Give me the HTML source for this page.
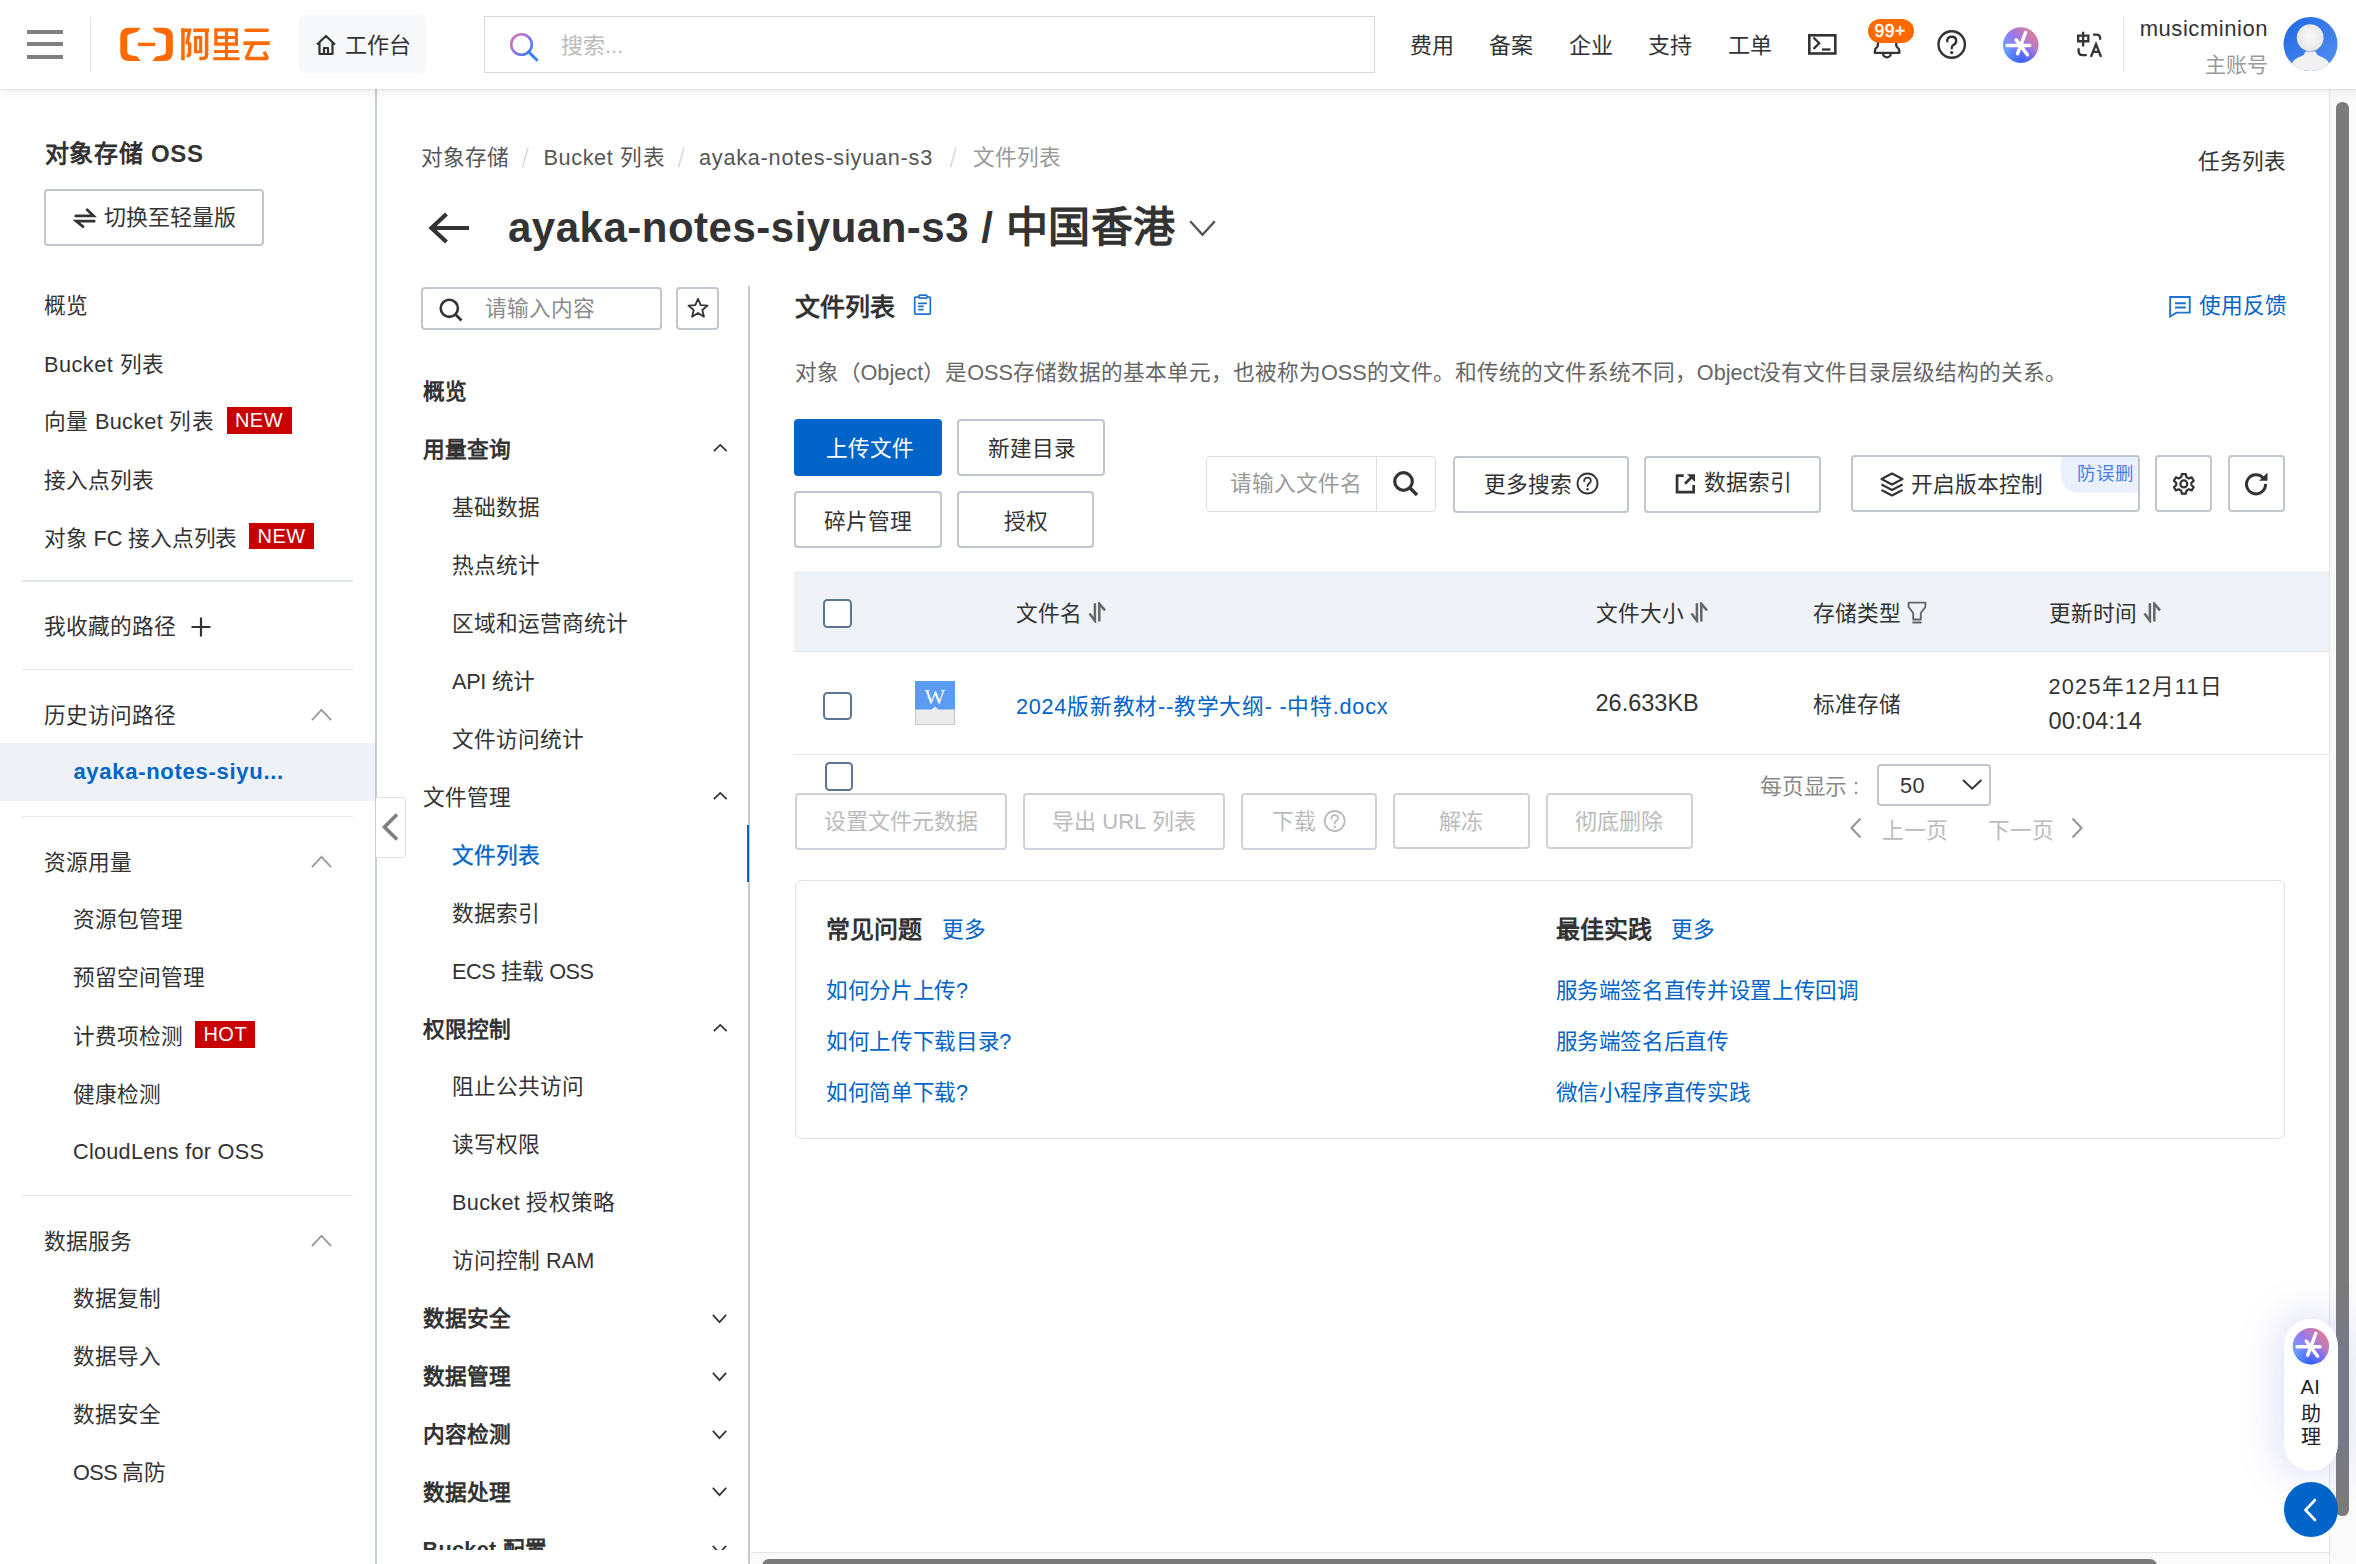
<!DOCTYPE html><html lang="zh-CN"><head><meta charset="utf-8"><title>OSS</title><style>
*{margin:0;padding:0;box-sizing:border-box}
html,body{width:2356px;height:1564px;overflow:hidden;background:#fff;font-family:"Liberation Sans",sans-serif;color:#333}
.a{position:absolute}
.t{position:absolute;white-space:nowrap;line-height:1}
.b{position:absolute;border:2px solid #c0c6ce;border-radius:4px;background:#fff}
</style></head><body>
<div class="a" style="left:0px;top:88px;width:375px;height:1476px;background:#fff"></div>
<div class="a" style="left:375px;top:88px;width:2px;height:1476px;background:#c6ccd4"></div>
<div class="t " style="left:44.5px;top:142px;font-size:24px;color:#333;font-weight:700;letter-spacing:0.75px;">对象存储 OSS</div>
<div class="b" style="left:44px;top:189px;width:220px;height:57px"></div>
<svg class="a" style="left:73px;top:205px;" width="24" height="26" viewBox="0 0 24 26" fill="none"><path d="M2.8 10.9 H20.6 L14.2 4.8 M21.2 16.2 H3.4 L10 21.6" stroke="#333" stroke-width="2.7" stroke-linecap="round" stroke-linejoin="miter"/></svg>
<div class="t " style="left:104px;top:207px;font-size:22px;color:#333;">切换至轻量版</div>
<div class="t " style="left:44px;top:295px;font-size:21.7px;color:#333;">概览</div>
<div class="t " style="left:44px;top:354px;font-size:21.7px;color:#333;letter-spacing:0.5px;">Bucket 列表</div>
<div class="t " style="left:44px;top:411px;font-size:21.7px;color:#333;letter-spacing:0.3px;">向量 Bucket 列表</div>
<div class="a" style="left:226.5px;top:407px;width:65px;height:26.6px;background:#c80000;color:#fff;font-size:20px;line-height:26.6px;text-align:center;letter-spacing:0.5px">NEW</div>
<div class="t " style="left:44px;top:469.5px;font-size:21.7px;color:#333;">接入点列表</div>
<div class="t " style="left:44px;top:527.5px;font-size:21.7px;color:#333;letter-spacing:-0.15px;">对象 FC 接入点列表</div>
<div class="a" style="left:249.3px;top:523px;width:64.7px;height:26.4px;background:#c80000;color:#fff;font-size:20px;line-height:26.4px;text-align:center;letter-spacing:0.5px">NEW</div>
<div class="a" style="left:22px;top:580px;width:331px;height:1.5px;background:#e3e6ea"></div>
<div class="t " style="left:44px;top:616px;font-size:21.7px;color:#333;">我收藏的路径</div>
<svg class="a" style="left:189px;top:615px;" width="24" height="24" viewBox="0 0 24 24" fill="none"><path d="M12 2.5 V21.5 M2.5 12 H21.5" stroke="#333" stroke-width="2.2"/></svg>
<div class="a" style="left:22px;top:668.5px;width:331px;height:1.5px;background:#e3e6ea"></div>
<div class="t " style="left:44px;top:705px;font-size:21.7px;color:#333;">历史访问路径</div>
<svg class="a" style="left:307.5px;top:706px;" width="27" height="18" viewBox="0 0 27 18" fill="none"><path d="M3.9 14.1 L13.5 3.9 L23.1 14.1" stroke="#999" stroke-width="1.8"/></svg>
<div class="a" style="left:0px;top:743px;width:375px;height:58px;background:#eef1f6"></div>
<div class="t " style="left:73.4px;top:761.2px;font-size:22px;color:#0064c8;font-weight:700;letter-spacing:0.72px;">ayaka-notes-siyu...</div>
<div class="a" style="left:22px;top:815.5px;width:331px;height:1.5px;background:#e3e6ea"></div>
<div class="t " style="left:44px;top:852px;font-size:21.7px;color:#333;">资源用量</div>
<svg class="a" style="left:307.5px;top:853px;" width="27" height="18" viewBox="0 0 27 18" fill="none"><path d="M3.9 14.1 L13.5 3.9 L23.1 14.1" stroke="#999" stroke-width="1.8"/></svg>
<div class="t " style="left:73px;top:909px;font-size:21.7px;color:#333;">资源包管理</div>
<div class="t " style="left:73px;top:967.4px;font-size:21.7px;color:#333;">预留空间管理</div>
<div class="t " style="left:73px;top:1025.6px;font-size:21.7px;color:#333;">计费项检测</div>
<div class="a" style="left:195.2px;top:1021.3px;width:60.2px;height:26.9px;background:#c80000;color:#fff;font-size:20px;line-height:26.9px;text-align:center;letter-spacing:0.5px">HOT</div>
<div class="t " style="left:73px;top:1083.5px;font-size:21.7px;color:#333;">健康检测</div>
<div class="t " style="left:73px;top:1140.5px;font-size:21.7px;color:#333;letter-spacing:0.25px;">CloudLens for OSS</div>
<div class="a" style="left:22px;top:1194.5px;width:331px;height:1.5px;background:#e3e6ea"></div>
<div class="t " style="left:44px;top:1230.5px;font-size:21.7px;color:#333;">数据服务</div>
<svg class="a" style="left:307.5px;top:1232px;" width="27" height="18" viewBox="0 0 27 18" fill="none"><path d="M3.9 14.1 L13.5 3.9 L23.1 14.1" stroke="#999" stroke-width="1.8"/></svg>
<div class="t " style="left:73px;top:1288.4px;font-size:21.7px;color:#333;">数据复制</div>
<div class="t " style="left:73px;top:1346.2px;font-size:21.7px;color:#333;">数据导入</div>
<div class="t " style="left:73px;top:1404px;font-size:21.7px;color:#333;">数据安全</div>
<div class="t " style="left:73px;top:1462px;font-size:21.7px;color:#333;letter-spacing:-0.6px;">OSS 高防</div>
<div class="a" style="left:376px;top:797px;width:30px;height:61px;border:1.5px solid #e2e2e2;border-left:none;border-radius:0 4px 4px 0;background:#fff"></div>
<svg class="a" style="left:378px;top:810px;" width="24" height="36" viewBox="0 0 24 36" fill="none"><path d="M19 4.5 L6.5 17 L19 29.5" stroke="#808080" stroke-width="3.6"/></svg>
<div class="t " style="left:420.5px;top:147px;font-size:21.7px;color:#555;">对象存储</div>
<svg class="a" style="left:517.2px;top:144px;" width="16" height="27" viewBox="0 0 16 27" fill="none"><path d="M11 3.5 L5.5 23.5" stroke="#d3d6db" stroke-width="1.4"/></svg>
<div class="t " style="left:543.5px;top:147px;font-size:21.7px;color:#555;letter-spacing:0.6px;">Bucket 列表</div>
<svg class="a" style="left:672.7px;top:144px;" width="16" height="27" viewBox="0 0 16 27" fill="none"><path d="M11 3.5 L5.5 23.5" stroke="#d3d6db" stroke-width="1.4"/></svg>
<div class="t " style="left:699px;top:147px;font-size:21.7px;color:#555;letter-spacing:0.75px;">ayaka-notes-siyuan-s3</div>
<svg class="a" style="left:945.2px;top:144px;" width="16" height="27" viewBox="0 0 16 27" fill="none"><path d="M11 3.5 L5.5 23.5" stroke="#d3d6db" stroke-width="1.4"/></svg>
<div class="t " style="left:972.5px;top:147px;font-size:21.7px;color:#999;">文件列表</div>
<div class="t " style="left:2198px;top:150.6px;font-size:21.7px;color:#333;">任务列表</div>
<svg class="a" style="left:426px;top:208px;" width="48" height="40" viewBox="0 0 48 40" fill="none"><path d="M43 20 H7 M20.5 6 L5.5 20 L20.5 34" stroke="#333" stroke-width="4.2"/></svg>
<div class="t " style="left:508px;top:207px;font-size:42px;color:#333;font-weight:700;letter-spacing:0.5px;">ayaka-notes-siyuan-s3 / 中国香港</div>
<svg class="a" style="left:1185.5px;top:216.5px;" width="33" height="22" viewBox="0 0 33 22" fill="none"><path d="M4.2 4.2 L16.5 17.8 L28.8 4.2" stroke="#555" stroke-width="2.4"/></svg>
<div class="b" style="left:420.5px;top:286.5px;width:241px;height:43px"></div>
<svg class="a" style="left:437px;top:296px;" width="28" height="28" viewBox="0 0 28 28" fill="none"><circle cx="12.3" cy="12.3" r="8.6" stroke="#333" stroke-width="2.6"/><path d="M18.5 18.5 L24.5 24.5" stroke="#333" stroke-width="2.8"/></svg>
<div class="t " style="left:484.5px;top:297.8px;font-size:21.7px;color:#8c8c8c;">请输入内容</div>
<div class="b" style="left:676px;top:286.5px;width:43px;height:43px"></div>
<svg class="a" style="left:684px;top:294px;" width="28" height="28" viewBox="0 0 28 28" fill="none"><path transform="translate(14 14.2) scale(0.9) translate(-14 -14)" d="M14 3.5 L17 10.6 L24.6 11.1 L18.8 16 L20.6 23.5 L14 19.4 L7.4 23.5 L9.2 16 L3.4 11.1 L11 10.6 Z" stroke="#333" stroke-width="2" stroke-linejoin="round"/></svg>
<div class="a" style="left:748.3px;top:286px;width:2px;height:1278px;background:#c4c9d0"></div>
<div class="a" style="left:746.5px;top:824.8px;width:2.5px;height:57.6px;background:#0064c8"></div>
<div class="a" style="left:377px;top:340px;width:371px;height:1210px;overflow:hidden">
<div class="t " style="left:45.5px;top:41px;font-size:21.7px;color:#333;font-weight:700;">概览</div>
<div class="t " style="left:45.5px;top:99px;font-size:21.7px;color:#333;font-weight:700;">用量查询</div>
<svg class="a" style="left:332.5px;top:101px;" width="20.5" height="14" viewBox="0 0 20.5 14" fill="none"><path d="M3.85 10.15 L10.25 3.85 L16.65 10.15" stroke="#333" stroke-width="1.7"/></svg>
<div class="t " style="left:75px;top:157px;font-size:21.7px;color:#333;">基础数据</div>
<div class="t " style="left:75px;top:215px;font-size:21.7px;color:#333;">热点统计</div>
<div class="t " style="left:75px;top:273px;font-size:21.7px;color:#333;">区域和运营商统计</div>
<div class="t " style="left:75px;top:331px;font-size:21.7px;color:#333;letter-spacing:-0.3px;">API 统计</div>
<div class="t " style="left:75px;top:389px;font-size:21.7px;color:#333;">文件访问统计</div>
<div class="t " style="left:45.5px;top:447px;font-size:21.7px;color:#333;">文件管理</div>
<svg class="a" style="left:332.5px;top:449px;" width="20.5" height="14" viewBox="0 0 20.5 14" fill="none"><path d="M3.85 10.15 L10.25 3.85 L16.65 10.15" stroke="#333" stroke-width="1.7"/></svg>
<div class="t " style="left:75px;top:504.5px;font-size:21.7px;color:#0064c8;-webkit-text-stroke:0.35px #0064c8;">文件列表</div>
<div class="t " style="left:75px;top:563px;font-size:21.7px;color:#333;">数据索引</div>
<div class="t " style="left:75px;top:621px;font-size:21.7px;color:#333;letter-spacing:-0.5px;">ECS 挂载 OSS</div>
<div class="t " style="left:45.5px;top:679px;font-size:21.7px;color:#333;font-weight:700;">权限控制</div>
<svg class="a" style="left:332.5px;top:681px;" width="20.5" height="14" viewBox="0 0 20.5 14" fill="none"><path d="M3.85 10.15 L10.25 3.85 L16.65 10.15" stroke="#333" stroke-width="1.7"/></svg>
<div class="t " style="left:75px;top:736px;font-size:21.7px;color:#333;">阻止公共访问</div>
<div class="t " style="left:75px;top:794px;font-size:21.7px;color:#333;">读写权限</div>
<div class="t " style="left:75px;top:851.5px;font-size:21.7px;color:#333;letter-spacing:0.3px;">Bucket 授权策略</div>
<div class="t " style="left:75px;top:909.5px;font-size:21.7px;color:#333;letter-spacing:0.0px;">访问控制 RAM</div>
<div class="t " style="left:45.5px;top:968px;font-size:21.7px;color:#333;font-weight:700;">数据安全</div>
<svg class="a" style="left:332px;top:970.5px;" width="21" height="15" viewBox="0 0 21 15" fill="none"><path d="M3.85 3.85 L10.5 11.15 L17.15 3.85" stroke="#333" stroke-width="1.7"/></svg>
<div class="t " style="left:45.5px;top:1026px;font-size:21.7px;color:#333;font-weight:700;">数据管理</div>
<svg class="a" style="left:332px;top:1028.5px;" width="21" height="15" viewBox="0 0 21 15" fill="none"><path d="M3.85 3.85 L10.5 11.15 L17.15 3.85" stroke="#333" stroke-width="1.7"/></svg>
<div class="t " style="left:45.5px;top:1084px;font-size:21.7px;color:#333;font-weight:700;">内容检测</div>
<svg class="a" style="left:332px;top:1086.5px;" width="21" height="15" viewBox="0 0 21 15" fill="none"><path d="M3.85 3.85 L10.5 11.15 L17.15 3.85" stroke="#333" stroke-width="1.7"/></svg>
<div class="t " style="left:45.5px;top:1141.5px;font-size:21.7px;color:#333;font-weight:700;">数据处理</div>
<svg class="a" style="left:332px;top:1144.0px;" width="21" height="15" viewBox="0 0 21 15" fill="none"><path d="M3.85 3.85 L10.5 11.15 L17.15 3.85" stroke="#333" stroke-width="1.7"/></svg>
<div class="t " style="left:45.5px;top:1199px;font-size:21.7px;color:#333;font-weight:700;letter-spacing:0.3px;">Bucket 配置</div>
<svg class="a" style="left:332px;top:1201.5px;" width="21" height="15" viewBox="0 0 21 15" fill="none"><path d="M3.85 3.85 L10.5 11.15 L17.15 3.85" stroke="#333" stroke-width="1.7"/></svg>
</div>
<div class="t " style="left:794.5px;top:295px;font-size:25px;color:#333;font-weight:700;">文件列表</div>
<svg class="a" style="left:910px;top:292px;" width="24" height="26" viewBox="0 0 24 26" fill="none"><rect x="4.7" y="5.1" width="15.6" height="17" rx="0.8" stroke="#1f72d0" stroke-width="1.7"/><rect x="9" y="3.1" width="7.9" height="3" rx="0.8" stroke="#1f72d0" stroke-width="1.7" fill="#fff"/><path d="M8.8 11.3 H16.2 M8.8 14.4 H13 M8.8 17.6 H13" stroke="#1f72d0" stroke-width="1.7" stroke-linecap="round"/></svg>
<svg class="a" style="left:2166px;top:294px;" width="27" height="26" viewBox="0 0 27 26" fill="none"><path d="M4.15 19 V2.95 H23.75 V18.65 H10.5 L4.15 22.6 V18" stroke="#1f72d0" stroke-width="1.9" stroke-linejoin="miter"/><path d="M9 9.2 H19.8 M9 13.5 H19.8" stroke="#1f72d0" stroke-width="2"/></svg>
<div class="t " style="left:2198.5px;top:295px;font-size:21.7px;color:#0064c8;">使用反馈</div>
<div class="t " style="left:794.5px;top:362px;font-size:21.7px;color:#666;">对象（Object）是OSS存储数据的基本单元，也被称为OSS的文件。和传统的文件系统不同，Object没有文件目录层级结构的关系。</div>
<div class="a" style="left:793.7px;top:418.6px;width:148.3px;height:57.6px;background:#0064c8;border-radius:4px"></div>
<div class="t " style="left:826px;top:437.5px;font-size:21.7px;color:#fff;">上传文件</div>
<div class="a" style="left:957.3px;top:418.6px;width:147.7px;height:57.6px;border:2px solid #c0c6ce;border-radius:4px;background:#fff"></div>
<div class="t " style="left:987.5px;top:438px;font-size:21.7px;color:#333;">新建目录</div>
<div class="a" style="left:793.7px;top:491.2px;width:148.3px;height:57.3px;border:2px solid #c0c6ce;border-radius:4px;background:#fff"></div>
<div class="t " style="left:824px;top:511px;font-size:21.7px;color:#333;">碎片管理</div>
<div class="a" style="left:957.3px;top:491.2px;width:137px;height:57.3px;border:2px solid #c0c6ce;border-radius:4px;background:#fff"></div>
<div class="t " style="left:1004px;top:510.5px;font-size:21.7px;color:#333;">授权</div>
<div class="a" style="left:1205.7px;top:455.7px;width:230.6px;height:56.6px;border:1.5px solid #dcdfe4;border-radius:4px;background:#fff"></div>
<div class="a" style="left:1375.5px;top:456.5px;width:1.5px;height:55px;background:#dcdfe4"></div>
<div class="t " style="left:1230px;top:473px;font-size:21.7px;color:#999;">请输入文件名</div>
<svg class="a" style="left:1390px;top:468px;" width="32" height="32" viewBox="0 0 32 32" fill="none"><circle cx="13.5" cy="13.5" r="8.8" stroke="#333" stroke-width="3.2"/><path d="M19.8 19.8 L27 27" stroke="#333" stroke-width="3.4"/></svg>
<div class="a" style="left:1452.6px;top:455.5px;width:176px;height:57px;border:2px solid #c0c6ce;border-radius:4px;background:#fff"></div>
<div class="t " style="left:1483.5px;top:474px;font-size:21.7px;color:#333;">更多搜索</div>
<svg class="a" style="left:1575px;top:471px;" width="26" height="26" viewBox="0 0 26 26" fill="none"><circle cx="12.5" cy="12.5" r="10" stroke="#333" stroke-width="1.8"/><path d="M9.2 10 Q9.2 6.7 12.5 6.7 Q15.8 6.7 15.8 9.8 Q15.8 11.7 13.9 12.6 Q12.5 13.3 12.5 15.1" stroke="#333" stroke-width="1.8" stroke-linecap="round"/><circle cx="12.5" cy="18.2" r="1.2" fill="#333"/></svg>
<div class="a" style="left:1644.3px;top:455.5px;width:176.6px;height:57px;border:2px solid #c0c6ce;border-radius:4px;background:#fff"></div>
<svg class="a" style="left:1673px;top:472px;" width="24" height="24" viewBox="0 0 24 24" fill="none"><path d="M10.7 3.55 H4.05 V20.05 H20.65 V13" stroke="#333" stroke-width="2.7"/><path d="M12 11.8 L19 4.8" stroke="#333" stroke-width="2.7"/><path d="M14 2.2 H22 V9.9 Z" fill="#333"/></svg>
<div class="t " style="left:1703.5px;top:471.5px;font-size:21.7px;color:#333;">数据索引</div>
<div class="a" style="left:1851px;top:455.2px;width:288.7px;height:57px;border:2px solid #c0c6ce;border-radius:4px;background:#fff;overflow:hidden"><div class="a" style="left:208px;top:0;width:80px;height:36px;background:#ebf1fc;border-bottom-left-radius:18px"></div></div>
<div class="t " style="left:2077px;top:465px;font-size:18.5px;color:#4a7ee6;">防误删</div>
<svg class="a" style="left:1878px;top:470px;" width="28" height="28" viewBox="0 0 28 28" fill="none"><path d="M14 3.5 L24.5 9 L14 14.5 L3.5 9 Z" stroke="#333" stroke-width="2.1" stroke-linejoin="round"/><path d="M3.5 14.5 L14 20 L24.5 14.5 M3.5 20 L14 25.5 L24.5 20" stroke="#333" stroke-width="2.1" stroke-linejoin="round"/></svg>
<div class="t " style="left:1911px;top:474px;font-size:21.7px;color:#333;">开启版本控制</div>
<div class="a" style="left:2155.3px;top:455.2px;width:57.2px;height:57px;border:2px solid #c0c6ce;border-radius:4px;background:#fff"></div>
<svg class="a" style="left:2170px;top:470px;" width="28" height="28" viewBox="0 0 28 28" fill="none"><g transform="translate(13.8 13.9) scale(0.89)"><path d="M-2.2 -11 H2.2 L3 -7.6 L5.6 -6.1 L8.9 -7.3 L11.1 -3.5 L8.5 -1.3 V1.3 L11.1 3.5 L8.9 7.3 L5.6 6.1 L3 7.6 L2.2 11 H-2.2 L-3 7.6 L-5.6 6.1 L-8.9 7.3 L-11.1 3.5 L-8.5 1.3 V-1.3 L-11.1 -3.5 L-8.9 -7.3 L-5.6 -6.1 L-3 -7.6 Z" stroke="#333" stroke-width="2.5" stroke-linejoin="round"/><circle r="3.9" stroke="#333" stroke-width="2.5"/></g></svg>
<div class="a" style="left:2228px;top:455.2px;width:56.7px;height:57px;border:2px solid #c0c6ce;border-radius:4px;background:#fff"></div>
<svg class="a" style="left:2242px;top:469px;" width="28" height="28" viewBox="0 0 28 28" fill="none"><path d="M21.5 9.5 A9.5 9.5 0 1 0 23.5 15" stroke="#333" stroke-width="3"/><path d="M25.5 3.5 V11.8 H17.2 Z" fill="#333"/></svg>
<div class="a" style="left:794px;top:571px;width:1535px;height:81px;background:#eff2f7;border-bottom:1.5px solid #e3e6eb"></div>
<div class="a" style="left:823px;top:599px;width:28.5px;height:28.5px;border:2.2px solid #5b7694;border-radius:4.5px;background:#fff"></div>
<div class="t " style="left:1015.5px;top:603px;font-size:21.7px;color:#333;">文件名</div>
<svg class="a" style="left:1088.2px;top:602.3px;" width="20" height="21" viewBox="0 0 20 21" fill="none"><path d="M6.9 1.2 V18.7 L1.5 11.6" stroke="#666" stroke-width="2.5" stroke-linejoin="miter"/><path d="M11.3 19.5 V1.8 L17 8.4" stroke="#666" stroke-width="2.5" stroke-linejoin="miter"/></svg>
<div class="t " style="left:1595.5px;top:603px;font-size:21.7px;color:#333;">文件大小</div>
<svg class="a" style="left:1690px;top:602.3px;" width="20" height="21" viewBox="0 0 20 21" fill="none"><path d="M6.9 1.2 V18.7 L1.5 11.6" stroke="#666" stroke-width="2.5" stroke-linejoin="miter"/><path d="M11.3 19.5 V1.8 L17 8.4" stroke="#666" stroke-width="2.5" stroke-linejoin="miter"/></svg>
<div class="t " style="left:1812.5px;top:603px;font-size:21.7px;color:#333;">存储类型</div>
<svg class="a" style="left:1905px;top:599px;" width="24" height="27" viewBox="0 0 24 27" fill="none"><path d="M3.6 3.6 H20.4 V8 L15.8 14 V20.5 H8.2 V14 L3.6 8 Z" stroke="#666" stroke-width="1.9" stroke-linejoin="round"/><path d="M8.2 23.5 H15.8" stroke="#666" stroke-width="1.9" stroke-linecap="round"/></svg>
<div class="t " style="left:2048.5px;top:603px;font-size:21.7px;color:#333;">更新时间</div>
<svg class="a" style="left:2143px;top:602.3px;" width="20" height="21" viewBox="0 0 20 21" fill="none"><path d="M6.9 1.2 V18.7 L1.5 11.6" stroke="#666" stroke-width="2.5" stroke-linejoin="miter"/><path d="M11.3 19.5 V1.8 L17 8.4" stroke="#666" stroke-width="2.5" stroke-linejoin="miter"/></svg>
<div class="a" style="left:823px;top:691.5px;width:28.5px;height:28.5px;border:2.2px solid #5b7694;border-radius:4.5px;background:#fff"></div>
<div class="a" style="left:915px;top:681px;width:40px;height:44px;background:#eaeaea;border:1.3px solid #c8c8c8;border-top:none"></div>
<svg class="a" style="left:915px;top:681px;" width="40" height="31" viewBox="0 0 40 31" fill="none"><path d="M0 0 H40 V28.5 H23.5 L20 25.5 L16.5 28.5 H0 Z" fill="#5a9bf3"/></svg>
<div class="t" style="left:915px;top:686px;width:40px;text-align:center;font-family:'Liberation Serif',serif;font-size:22px;color:#fff">W</div>
<div class="t " style="left:1016px;top:696px;font-size:21.7px;color:#0064c8;letter-spacing:0.72px;">2024版新教材--教学大纲- -中特.docx</div>
<div class="t " style="left:1595.5px;top:691.5px;font-size:23.5px;color:#333;letter-spacing:0px;">26.633KB</div>
<div class="t " style="left:1812.5px;top:693.5px;font-size:21.7px;color:#333;">标准存储</div>
<div class="t " style="left:2048.5px;top:676px;font-size:21.7px;color:#333;letter-spacing:1.25px;">2025年12月11日</div>
<div class="t " style="left:2048.5px;top:710px;font-size:23.5px;color:#333;letter-spacing:0.25px;">00:04:14</div>
<div class="a" style="left:794px;top:753.5px;width:1535px;height:1.5px;background:#e3e6eb"></div>
<div class="a" style="left:824.7px;top:762.4px;width:28.5px;height:28.5px;border:2.2px solid #5b7694;border-radius:4.5px;background:#fff"></div>
<div class="a" style="left:794.5px;top:792.6px;width:212.3px;height:57px;border:2px solid #cfd3d9;border-radius:4px;background:#fff"></div>
<div class="t" style="left:794.5px;top:810.9px;width:212.3px;text-align:center;font-size:22px;color:#bbb">设置文件元数据</div>
<div class="a" style="left:1022.6px;top:792.6px;width:202.7px;height:57px;border:2px solid #cfd3d9;border-radius:4px;background:#fff"></div>
<div class="t" style="left:1022.6px;top:810.9px;width:202.7px;text-align:center;font-size:22px;color:#bbb">导出 URL 列表</div>
<div class="a" style="left:1241px;top:792.6px;width:136.4px;height:57px;border:2px solid #cfd3d9;border-radius:4px;background:#fff"></div>
<div class="t " style="left:1272px;top:811px;font-size:21.7px;color:#bbb;">下载</div>
<svg class="a" style="left:1320px;top:806px;" width="30" height="30" viewBox="0 0 30 30" fill="none"><circle cx="14.7" cy="15" r="10" stroke="#bbb" stroke-width="1.8"/><path d="M11.4 12.5 Q11.4 9.2 14.7 9.2 Q18 9.2 18 12.3 Q18 14.2 16.1 15.1 Q14.7 15.8 14.7 17.6" stroke="#bbb" stroke-width="1.8" stroke-linecap="round"/><circle cx="14.7" cy="20.7" r="1.2" fill="#bbb"/></svg>
<div class="a" style="left:1393px;top:792.8px;width:136.8px;height:56.5px;border:2px solid #cfd3d9;border-radius:4px;background:#fff"></div>
<div class="t" style="left:1393px;top:810.8499999999999px;width:136.8px;text-align:center;font-size:22px;color:#bbb">解冻</div>
<div class="a" style="left:1545.6px;top:792.8px;width:147.7px;height:56.5px;border:2px solid #cfd3d9;border-radius:4px;background:#fff"></div>
<div class="t" style="left:1545.6px;top:810.8499999999999px;width:147.7px;text-align:center;font-size:22px;color:#bbb">彻底删除</div>
<div class="t " style="left:1760px;top:776px;font-size:21.7px;color:#888;letter-spacing:-0.2px;">每页显示 :</div>
<div class="a" style="left:1876.6px;top:763.8px;width:114.6px;height:42.1px;border:2px solid #c0c6ce;border-radius:4px;background:#fff"></div>
<div class="t " style="left:1900px;top:774.5px;font-size:21.7px;color:#333;letter-spacing:0.5px;">50</div>
<svg class="a" style="left:1958.6px;top:776px;" width="26.4" height="16.7" viewBox="0 0 26.4 16.7" fill="none"><path d="M4.0 4.0 L13.2 12.7 L22.4 4.0" stroke="#333" stroke-width="2"/></svg>
<svg class="a" style="left:1846px;top:815px;" width="20" height="26" viewBox="0 0 20 26" fill="none"><path d="M14.5 3.5 L5.5 13 L14.5 22.5" stroke="#999" stroke-width="2.2"/></svg>
<div class="t " style="left:1881.5px;top:819.5px;font-size:21.7px;color:#bbb;">上一页</div>
<div class="t " style="left:1987.5px;top:819.5px;font-size:21.7px;color:#bbb;">下一页</div>
<svg class="a" style="left:2067px;top:815px;" width="20" height="26" viewBox="0 0 20 26" fill="none"><path d="M5.5 3.5 L14.5 13 L5.5 22.5" stroke="#999" stroke-width="2.2"/></svg>
<div class="a" style="left:794.5px;top:879.5px;width:1490px;height:259.5px;border:1.5px solid #e3e3e3;border-radius:6px;background:#fff"></div>
<div class="t " style="left:826px;top:918px;font-size:24px;color:#333;font-weight:700;">常见问题</div>
<div class="t " style="left:941.5px;top:919px;font-size:21.7px;color:#0064c8;">更多</div>
<div class="t " style="left:826px;top:979.5px;font-size:21.55px;color:#0064c8;letter-spacing:-0.35px;">如何分片上传?</div>
<div class="t " style="left:826px;top:1030.5px;font-size:21.55px;color:#0064c8;letter-spacing:-0.35px;">如何上传下载目录?</div>
<div class="t " style="left:826px;top:1081.5px;font-size:21.55px;color:#0064c8;letter-spacing:-0.35px;">如何简单下载?</div>
<div class="t " style="left:1555.5px;top:918px;font-size:24px;color:#333;font-weight:700;">最佳实践</div>
<div class="t " style="left:1670.5px;top:919px;font-size:21.7px;color:#0064c8;">更多</div>
<div class="t " style="left:1555.5px;top:979.5px;font-size:21.55px;color:#0064c8;letter-spacing:-0.35px;">服务端签名直传并设置上传回调</div>
<div class="t " style="left:1555.5px;top:1030.5px;font-size:21.55px;color:#0064c8;letter-spacing:-0.35px;">服务端签名后直传</div>
<div class="t " style="left:1555.5px;top:1081.5px;font-size:21.55px;color:#0064c8;letter-spacing:-0.35px;">微信小程序直传实践</div>
<div class="a" style="left:750.5px;top:1551.5px;width:1579px;height:12.5px;background:#fafafa;border-top:1.5px solid #e6e6e6"></div>
<div class="a" style="left:761.5px;top:1558.5px;width:1395px;height:14px;background:#7b7b7b;border-radius:7px"></div>
<div class="a" style="left:2329px;top:88px;width:27px;height:1476px;background:#fafafa;border-left:1.5px solid #e6e6e6"></div>
<div class="a" style="left:2336.2px;top:101.5px;width:12.8px;height:1414px;background:#7b7b7b;border-radius:6.4px"></div>
<div class="a" style="left:2284px;top:1319.4px;width:54px;height:152px;border-radius:27px;background:#fff;box-shadow:0 0 40px 6px rgba(110,110,240,0.22)"></div>
<svg class="a" style="left:2292px;top:1327px;" width="38" height="39" viewBox="0 0 38 39" fill="none"><defs><linearGradient id="ag2" x1="0.1" y1="0.8" x2="0.9" y2="0.1"><stop offset="0" stop-color="#5fa6ff"/><stop offset="0.5" stop-color="#9c76ea"/><stop offset="1" stop-color="#e2828c"/></linearGradient><radialGradient id="ab2" cx="0.5" cy="1" r="0.55"><stop offset="0" stop-color="#3558ff" stop-opacity="0.95"/><stop offset="1" stop-color="#3558ff" stop-opacity="0"/></radialGradient></defs><circle cx="18.9" cy="19.3" r="18.2" fill="url(#ag2)"/><circle cx="18.9" cy="19.3" r="18.2" fill="url(#ab2)"/><path d="M5 19.8 H28 M23.8 6.5 L15.7 28.2 M14.2 14 L25.6 29.2" stroke="#fff" stroke-width="3.5" stroke-linecap="round"/></svg>
<div class="t " style="left:2300.5px;top:1377px;font-size:20px;color:#222;letter-spacing:0.5px;">AI</div>
<div class="t " style="left:2301px;top:1403.5px;font-size:20px;color:#222;">助</div>
<div class="t " style="left:2301px;top:1427px;font-size:20px;color:#222;">理</div>
<div class="a" style="left:2283.6px;top:1482px;width:54.4px;height:55px;background:#0064c8;border-radius:50%"></div>
<svg class="a" style="left:2298px;top:1496px;" width="24" height="28" viewBox="0 0 24 28" fill="none"><path d="M17 4 L7.5 14 L17 24" stroke="#fff" stroke-width="2.6" stroke-linecap="round"/></svg>
<div class="a" style="left:0px;top:0px;width:2356px;height:89px;background:#fff;box-shadow:0 1px 1.5px rgba(0,0,0,0.07),0 3px 10px rgba(0,0,0,0.07);z-index:5"></div>
<div class="a" style="left:0;top:0;width:2356px;height:88px;z-index:6">
<div class="a" style="left:27px;top:29.6px;width:36px;height:4px;background:#808080"></div>
<div class="a" style="left:27px;top:42.3px;width:36px;height:4px;background:#808080"></div>
<div class="a" style="left:27px;top:54.9px;width:36px;height:4px;background:#808080"></div>
<div class="a" style="left:89.5px;top:17px;width:1.5px;height:54.5px;background:#e3e3e3"></div>
<svg class="a" style="left:120px;top:27px;" width="53" height="35" viewBox="0 0 53 35" fill="none"><path d="M20.7 0.8 L9 0.8 Q0.3 0.8 0.3 9.5 L0.3 25.2 Q0.3 33.9 9 33.9 L20.7 33.9 L17.2 29.6 Q12.5 28.4 9.8 27.9 Q7.2 27.3 7.2 25 L7.2 9.7 Q7.2 7.4 9.8 6.9 Q12.5 6.3 17.2 5.1 Z" fill="#ff6a00"/><path d="M20.7 0.8 L9 0.8 Q0.3 0.8 0.3 9.5 L0.3 25.2 Q0.3 33.9 9 33.9 L20.7 33.9 L17.2 29.6 Q12.5 28.4 9.8 27.9 Q7.2 27.3 7.2 25 L7.2 9.7 Q7.2 7.4 9.8 6.9 Q12.5 6.3 17.2 5.1 Z" fill="#ff6a00" transform="translate(53.1 0) scale(-1 1)"/><rect x="18.1" y="15.7" width="17.2" height="3.4" fill="#ff6a00"/></svg>
<svg class="a" style="left:175px;top:22px;" width="100" height="44" viewBox="0 0 100 44" fill="none"><g stroke="#ff6a00" stroke-width="3.5" fill="none" stroke-linejoin="miter"><path d="M7.95 6.4 V38.2"/><path d="M6.2 8.2 H14.5 L12.2 20.6 L14.6 22 V31.2 Q14.6 33.6 11.6 34"/><path d="M18.25 8.2 H34"/><path d="M31.6 8 V32.5 Q31.6 36.6 27 36.6 H24.3"/><path d="M20.6 15.5 H25.7 V29.7 H20.6 Z" stroke-width="3.1"/><path d="M40.85 7.97 H61.4 V22.2 H40.85 Z" stroke-width="3.2"/><path d="M40.8 15.5 H61.4" stroke-width="3"/><path d="M51.5 7 V36" stroke-width="3.2"/><path d="M39 29.5 H63.7" stroke-width="3"/><path d="M38.2 36.7 H64.5" stroke-width="3"/><path d="M71.2 8.2 H92.2" stroke-linecap="round"/><path d="M68.4 21.2 H94.8" stroke-width="3.8"/><path d="M77.5 22.5 L71.2 36.5 H92.5 L89.2 29.8" stroke-width="3.4" stroke-linejoin="bevel"/></g></svg>
<div class="a" style="left:299px;top:15px;width:127px;height:58px;background:#f7f8fa;border-radius:6px"></div>
<svg class="a" style="left:314px;top:33px;" width="24" height="23" viewBox="0 0 24 23" fill="none"><path d="M3 11.5 L12 3 L21 11.5 M5.5 9.5 V21 H18.5 V9.5 M10 21 V15 H14 V21" stroke="#333" stroke-width="2.2" stroke-linejoin="round"/></svg>
<div class="t " style="left:345px;top:35px;font-size:22px;color:#333;">工作台</div>
<div class="a" style="left:484px;top:15.5px;width:891px;height:57.5px;border:1.5px solid #d9d9d9;background:#fff"></div>
<svg class="a" style="left:506px;top:29px;" width="36" height="36" viewBox="0 0 36 36" fill="none"><defs><linearGradient id="sg" x1="0" y1="0" x2="1" y2="1"><stop offset="0" stop-color="#e07b9b"/><stop offset="0.45" stop-color="#9a72e6"/><stop offset="1" stop-color="#2f80f0"/></linearGradient></defs><circle cx="15.5" cy="15.5" r="10.3" stroke="url(#sg)" stroke-width="2.6"/><path d="M22.8 23 L30.5 30.7" stroke="#3a82f0" stroke-width="3" stroke-linecap="square"/></svg>
<div class="t " style="left:561px;top:35px;font-size:22px;color:#bbb;">搜索...</div>
<div class="t " style="left:1410px;top:34.5px;font-size:22px;color:#333;">费用</div>
<div class="t " style="left:1489px;top:34.5px;font-size:22px;color:#333;">备案</div>
<div class="t " style="left:1568.5px;top:34.5px;font-size:22px;color:#333;">企业</div>
<div class="t " style="left:1648px;top:34.5px;font-size:22px;color:#333;">支持</div>
<div class="t " style="left:1727.5px;top:34.5px;font-size:22px;color:#333;">工单</div>
<svg class="a" style="left:1806px;top:32px;" width="32" height="25" viewBox="0 0 32 25" fill="none"><rect x="3.3" y="3.3" width="26" height="18.2" stroke="#333" stroke-width="2.6"/><path d="M7.5 5.5 L13.2 11.2 L7.5 16.9" stroke="#333" stroke-width="2.3"/><path d="M16 17.5 H24.5" stroke="#333" stroke-width="2.3"/></svg>
<svg class="a" style="left:1870px;top:36px;" width="34" height="24" viewBox="0 0 34 24" fill="none"><path d="M7.9 4 V9 Q7.9 10.5 6.5 11.6 Q4.9 12.8 4.9 14.5 V16.9 H29.3 V14.5 Q29.3 12.8 27.6 11.6 Q26.2 10.5 26.2 9 V4" stroke="#333" stroke-width="2.3" stroke-linejoin="round"/><path d="M13 17.5 A3.9 3.9 0 0 0 20.8 17.5" stroke="#333" stroke-width="2.3"/></svg>
<div class="a" style="left:1868px;top:19px;width:46px;height:23.6px;background:#ff6a00;border-radius:12px"></div>
<div class="t " style="left:1874.5px;top:23.2px;font-size:17.5px;color:#fff;letter-spacing:0.5px;-webkit-text-stroke:0.5px #fff">99+</div>
<svg class="a" style="left:1936px;top:29px;" width="32" height="32" viewBox="0 0 32 32" fill="none"><circle cx="15.7" cy="15.5" r="13.2" stroke="#333" stroke-width="2.4"/><path d="M11.2 12.2 Q11.2 7.8 15.7 7.8 Q20.2 7.8 20.2 12 Q20.2 14.6 17.6 15.8 Q15.7 16.8 15.7 19.2" stroke="#333" stroke-width="2.4" stroke-linecap="round"/><circle cx="15.7" cy="23.6" r="1.6" fill="#333"/></svg>
<svg class="a" style="left:2002px;top:26px;" width="38" height="38" viewBox="0 0 38 38" fill="none"><defs><linearGradient id="ag" x1="0.1" y1="0.8" x2="0.9" y2="0.1"><stop offset="0" stop-color="#5fa6ff"/><stop offset="0.5" stop-color="#9c76ea"/><stop offset="1" stop-color="#e2828c"/></linearGradient><radialGradient id="ab" cx="0.5" cy="1" r="0.55"><stop offset="0" stop-color="#3558ff" stop-opacity="0.95"/><stop offset="1" stop-color="#3558ff" stop-opacity="0"/></radialGradient></defs><circle cx="18.8" cy="19" r="17.8" fill="url(#ag)"/><circle cx="18.8" cy="19" r="17.8" fill="url(#ab)"/><path d="M5 19.5 H27.7 M23.6 6.5 L15.6 27.6 M14.2 13.9 L25.4 28.8" stroke="#fff" stroke-width="3.5" stroke-linecap="round"/></svg>
<svg class="a" style="left:2074px;top:29px;" width="32" height="31" viewBox="0 0 32 31" fill="none"><path d="M4.15 6.65 H14.35 V12.25 H4.15 Z M9.1 2.7 V17.5" stroke="#333" stroke-width="2.3"/><path d="M19 5.6 H22.5 Q26.2 5.6 26.2 9.4 V10.8" stroke="#333" stroke-width="2.3"/><path d="M4.6 19.3 V22 Q4.6 26.1 8.6 26.1 H12.8" stroke="#333" stroke-width="2.3"/><path d="M16.9 27.9 L22 15.2 L27.1 27.9 M18.6 22.9 H25.4" stroke="#333" stroke-width="2.3"/></svg>
<div class="a" style="left:2122.5px;top:17px;width:1.5px;height:54.5px;background:#e3e3e3"></div>
<div class="t" style="right:88px;top:18.4px;font-size:22px;color:#333;letter-spacing:0.55px;">musicminion</div>
<div class="t" style="right:88px;top:54px;font-size:21px;color:#999;">主账号</div>
<svg class="a" style="left:2283px;top:16px;" width="56" height="56" viewBox="0 0 56 56" fill="none"><defs><linearGradient id="avg" x1="0" y1="0" x2="1" y2="1"><stop offset="0" stop-color="#1f66e0"/><stop offset="1" stop-color="#5592f2"/></linearGradient><clipPath id="avc"><circle cx="27.5" cy="28" r="27"/></clipPath><radialGradient id="hd" cx="0.5" cy="0.45" r="0.6"><stop offset="0" stop-color="#fafafa"/><stop offset="1" stop-color="#e4e4e4"/></radialGradient></defs><circle cx="27.5" cy="28" r="27" fill="url(#avg)"/><g clip-path="url(#avc)"><path d="M8 49 Q10 43 18.5 40 Q22 38.5 22 35.5 L33 35.5 Q33 38.5 36.5 40 Q45 43 47 49 L50 60 L5 60 Z" fill="#f1f1f1"/><circle cx="27.2" cy="21.7" r="13.4" fill="url(#hd)"/></g></svg>
</div>
</body></html>
